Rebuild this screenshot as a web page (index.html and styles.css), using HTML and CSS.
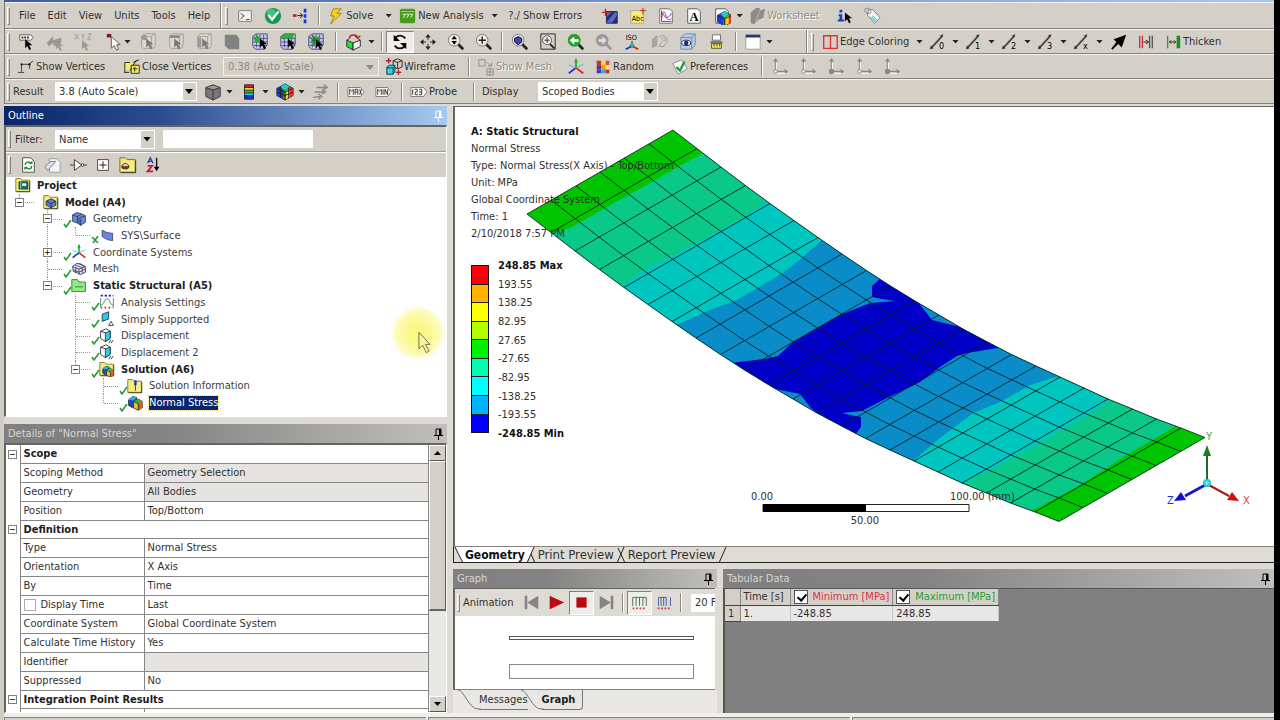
FILE: index.html
```html
<!DOCTYPE html>
<html lang="en">
<head>
<meta charset="utf-8">
<title>A: Static Structural - Mechanical</title>
<link rel="stylesheet" href="styles.css">
</head>
<body>
<svg class="defs" aria-hidden="true">
  <defs>
    <g id="ptr"><path d="M0 0v10l2.500-2.500 2 4.500 2-1-2-4.500h3.500z"/></g>
    <g id="gridcube">
      <path d="M2 4l4-3h12v12l-3 5H5l-3-3z" fill="#c8c8f4" stroke="#445" stroke-width="1"/>
      <path d="M6 2v14M10 2v15M14 2v15M18 6H3M18 10H3M17 14H3M2 4l4 3M5 1l3 4" stroke="#4a4a8a" stroke-width="1" fill="none"/>
    </g>
    <g id="graycube"><path d="M3 4l3-3h12v12l-2 4H5l-2-2z" fill="#dcd9d2" stroke="#9a9890"/><path d="M3 4h11l3-3M14 4v13" fill="none" stroke="#9a9890"/></g>
    <g id="folder"><path d="M1 4V2h6l2 2h9v14H1z" fill="#f6ee7c" stroke="#6b6420"/><path d="M18.500 5v13.500H2" fill="none" stroke="#333"/></g>
    <g id="lens"><path d="M12 12l6 6" stroke="#222" stroke-width="3"/><circle cx="8" cy="8" r="6.500" fill="#eceae4" stroke="#777"/></g>
    <g id="dispcube"><path d="M2 4l7-3 5 3v9l-6 4-6-4z" fill="#fff" stroke="#223"/><path d="M8 6l6-2v9l-6 4z" fill="#30d0e8" stroke="#223"/><path d="M2 4l6 2M12 19l3-4M15 19l3-4" stroke="#111" fill="none"/></g>
    <g id="rainbow"><path d="M1 6l9-5 9 5v8l-9 5-9-5z" fill="#28b428" stroke="#222"/><path d="M1 6l4-2 4 5-1 9-7-4z" fill="#2038d8"/><path d="M5 4l5-3 5 3-5 4z" fill="#20c8e0"/><path d="M14 5l5 1v8l-5 3z" fill="#e83020"/><path d="M11 9l4-3v10l-4 2z" fill="#f0d020"/><path d="M1 6l9 4 9-4M10 10v9" stroke="#222" fill="none"/></g>
    <g id="parts"><path d="M2 6l5-4 5 1v11l-5 2-5-3z" fill="#2048d8" stroke="#222"/><path d="M2 6l5-4 5 1-4 4z" fill="#20b8d8"/><path d="M8 8l6-3 5 3v8l-5 3-6-3z" fill="#e8c828" stroke="#222"/><path d="M8 8l6-3 5 3-5 3z" fill="#30b838"/><path d="M14 11l5-3v8l-5 3z" fill="#e85020"/><path d="M8 8l6 3v8" fill="none" stroke="#222"/></g>
    <g id="csys" fill="none"><path d="M5 15V3M5 15h11" stroke="#8a8882" stroke-width="1.500"/><path d="M5 0l-3 4h6zM19 15l-4-3v6z" fill="#8a8882"/><path d="M7 17h9M6 13V5" stroke="#fff"/></g>
    <g id="edge"><path d="M1 17L14 3" stroke="#444" stroke-width="2"/><path d="M0 18l4-1-3-3zM15 1l-4 2 2 2z" fill="#333"/></g>
    <g id="triad"><path d="M10 11V1" stroke="#20b020" stroke-width="2"/><path d="M10 0l-2 5h4z" fill="#20b020"/><path d="M10 11L2 17" stroke="#2030d0" stroke-width="2"/><path d="M10 11l8 6" stroke="#e02020" stroke-width="2"/><path d="M10 11l-8-3M10 11l8-4" stroke="#30c0c8"/></g>
    <g id="pin"><path d="M4 2h5v6M4 2v6M2 8.500h9M6.500 9v4" stroke="currentColor" fill="none"/><path d="M8 2v6" stroke="currentColor" stroke-width="2"/></g>
    <g id="tick"><path d="M2 6l2 3 5-7" fill="none" stroke="#1e9a2e" stroke-width="1.500"/></g>
  </defs>
</svg>

<div class="app">
<div class="titleline"></div>
<header class="bars">
  <div class="bar">
    <i class="grip"></i>
    <nav class="menu"><button>File</button><button>Edit</button><button>View</button><button>Units</button><button>Tools</button><button>Help</button></nav>
    <i class="edgeline"></i><i class="grip"></i>
    <button class="tool" aria-label="Command"><svg viewBox="0 0 20 20"><path d="M3 4h14v12H3z" fill="#f4f4f0" stroke="#777"/><path d="M5 7l4 3-4 3M11 14h4" fill="none" stroke="#333"/></svg></button>
    <button class="tool" aria-label="Solve status"><svg viewBox="0 0 20 20"><circle cx="10" cy="10" r="9" fill="#159a50"/><circle cx="8" cy="7" r="5" fill="#48c07c"/><path d="M5 9l4 5 7-9" fill="none" stroke="#fff" stroke-width="2.500"/></svg></button>
    <button class="tool" aria-label="Connections"><svg viewBox="0 0 20 20"><path d="M1 8h4v3H1z" fill="#c02030"/><path d="M6 9.500h5M9 7l3 2.500L9 12" stroke="#111" fill="none"/><path d="M13 2h3v4h-3zM13 8h3v4h-3zM13 14h3v4h-3z" fill="#2030d8"/></svg></button>
    <i class="sep"></i>
    <button class="text-tool wide-solve"><svg viewBox="0 0 20 20"><path d="M7 2h9l-5 5h5L4 19l4-9H4z" fill="#f8d020" stroke="#a08010"/></svg>Solve</button><i class="caret"></i>
    <button class="text-tool wide-new"><svg viewBox="0 0 20 20"><rect x="1" y="2" width="17" height="16" rx="2" fill="#4a9a20"/><path d="M2 5h15" stroke="#9cd070"/><path d="M4 8h3l-2 4M8 8h3l-2 4M12 8h3l-2 4" stroke="#fff" fill="none"/></svg>New Analysis</button><i class="caret"></i>
    <button class="text-tool wide-errors">?./ Show Errors</button>
    <button class="tool" aria-label="Section plane"><svg viewBox="0 0 20 20"><path d="M6 5h12v13H6z" fill="#5468c8" stroke="#223"/><path d="M12 18l6-9v9zM6 12l6-7h4L6 17z" fill="#20306a"/><path d="M1 6h8M5 2v8" stroke="#c02020" stroke-width="1.500"/></svg></button>
    <button class="tool" aria-label="Annotation"><svg viewBox="0 0 20 20"><path d="M2 4h14v14H2z" fill="#f8f070" stroke="#aa9"/><text x="3" y="15" class="ic">Abc</text><path d="M12 4h7M15.500 1v7" stroke="#c02020"/></svg></button>
    <button class="tool" aria-label="Chart"><svg viewBox="0 0 20 20"><path d="M3 2h11l3 3v13H3z" fill="#fafaff" stroke="#667"/><path d="M5 4v12h11" fill="none" stroke="#447"/><path d="M5 14c2-14 4-8 5-4s3 5 6 3" stroke="#d03030" fill="none"/><path d="M5 5c4 8 7 9 11 2" stroke="#3048d0" fill="none"/></svg></button>
    <button class="tool" aria-label="Comment"><svg viewBox="0 0 20 20"><path d="M3 2h11l3 3v13H3z" fill="#fafafa" stroke="#555"/><text x="5" y="15" class="ic-a">A</text></svg></button>
    <button class="tool" aria-label="Figure"><svg viewBox="0 0 20 20"><path d="M3 2h11l3 3v13H3z" fill="#fafafa" stroke="#555"/><svg x="4" y="4" width="12" height="12" viewBox="0 0 20 20"><use href="#rainbow"/></svg></svg></button><i class="caret"></i>
    <button class="text-tool off wide-sheet" disabled><svg viewBox="0 0 20 20"><path d="M3 6l6-5h4v3l6-2-2 10-5 2-5 5-4-1z" fill="#8d8b86"/><path d="M13 4l-5 14" stroke="#bbb"/></svg>Worksheet</button>
    <button class="tool" aria-label="Selection information"><svg viewBox="0 0 20 20"><path d="M5 3h3v3H5zM4 8h4v6h2v2H3v-2h2v-4H4z" fill="#2038c0"/><use href="#ptr" x="11" y="6"/></svg></button>
    <button class="tool" aria-label="Tag"><svg viewBox="0 0 20 20"><path d="M6 3h5l8 9-6 6-8-9z" fill="#f8f8f8" stroke="#777"/><path d="M11 9l5 5-3 3-5-5z" fill="#90d4e0"/><path d="M9 6C8 1 3 0 2 3s4 6 7 3" fill="none" stroke="#777"/></svg></button>
  </div>

  <div class="bar">
    <i class="grip"></i>
    <button class="tool" aria-label="Label"><svg viewBox="0 0 20 20"><path d="M2 2h12l3 3-3 3H2z" fill="#f8f8f4" stroke="#555"/><path d="M4 5h9" stroke="#333" stroke-width="2" stroke-dasharray="2 1"/><use href="#ptr" x="8" y="7"/></svg></button>
    <button class="tool" aria-label="Direction"><svg viewBox="0 0 20 20" fill="#9a9890"><path d="M1 11l7-8v5l9-3v6l-8 4-1-4-5 4z"/><use href="#ptr" x="11" y="8"/></svg></button>
    <button class="tool gap" aria-label="Coordinates"><svg viewBox="0 0 20 20" fill="#9a9890"><path d="M1 1l4 6M5 1L1 7M8 1l2 3 2-3M10 4v3M15 1h4l-4 6h4" stroke="#9a9890" fill="none"/><use href="#ptr" x="9" y="8"/></svg></button>
    <button class="tool tool-thin" aria-label="Select"><svg viewBox="0 0 20 20"><path d="M2 1h5v4H2z" fill="#7c1830"/><path d="M7 4v13l3-3 3 5 2-1-2-5h4z" fill="#fff" stroke="#555"/></svg></button><i class="caret"></i>
    <button class="tool" aria-label="Vertex"><svg viewBox="0 0 20 20"><use href="#graycube"/><circle cx="6" cy="5" r="3" fill="#999"/><use href="#ptr" x="8" y="6" fill="#777"/></svg></button>
    <button class="tool" aria-label="Edge"><svg viewBox="0 0 20 20"><use href="#graycube"/><path d="M3 4h11" stroke="#888" stroke-width="3"/><use href="#ptr" x="8" y="6" fill="#777"/></svg></button>
    <button class="tool" aria-label="Face"><svg viewBox="0 0 20 20"><use href="#graycube"/><path d="M3 5v11h4V5z" fill="#999"/><use href="#ptr" x="8" y="6" fill="#777"/></svg></button>
    <button class="tool" aria-label="Body"><svg viewBox="0 0 20 20"><path d="M2 2h13l3 4v12H6l-4-4z" fill="#828282"/></svg></button>
    <button class="tool" aria-label="Node"><svg viewBox="0 0 20 20"><use href="#gridcube"/><circle cx="7" cy="7" r="3.500" fill="#28b030"/><use href="#ptr" x="10" y="6"/></svg></button>
    <button class="tool" aria-label="Element face"><svg viewBox="0 0 20 20"><use href="#gridcube"/><path d="M3 4l3-3h11l-2 5H4z" fill="#28b030"/><use href="#ptr" x="10" y="6"/></svg></button>
    <button class="tool" aria-label="Element"><svg viewBox="0 0 20 20"><use href="#gridcube"/><path d="M5 4h9v9H5z" fill="#28b030"/><path d="M8 4v9M5 8h9" stroke="#154"/><use href="#ptr" x="10" y="7"/></svg></button>
    <i class="sep sep-wide"></i>
    <button class="tool" aria-label="Extend"><svg viewBox="0 0 20 20"><path d="M2 8l7 3v8l-7-4z" fill="#28e038" stroke="#222"/><path d="M9 11l8-3v7l-8 4z" fill="#f4f4f4" stroke="#222"/><path d="M2 8l3-2M17 8l-3-2" stroke="#222"/><path d="M5 6c0-5 9-5 9 0M11 3l3 3 3-3" stroke="#c02020" fill="none" stroke-width="1.500"/></svg></button><i class="caret"></i>
    <i class="sep"></i>
    <button class="tool pressed" aria-label="Rotate"><svg viewBox="0 0 20 20"><path d="M5 5c3-3 8-3 11 1M15 15c-3 3-8 3-11-1" fill="none" stroke="#111" stroke-width="2"/><path d="M3 2v7h7zM17 18v-7h-7z"/></svg></button>
    <button class="tool" aria-label="Pan"><svg viewBox="0 0 20 20"><path d="M10 3v14M3 10h14" stroke="#222" stroke-dasharray="5 4"/><path d="M10 1L7 5h6zM10 19l-3-4h6zM1 10l4-3v6zM19 10l-4-3v6z" fill="#222"/></svg></button>
    <button class="tool" aria-label="Zoom"><svg viewBox="0 0 20 20"><use href="#lens"/><path d="M8 3L5 7h6zM8 13L5 9h6z"/></svg></button>
    <button class="tool" aria-label="Box zoom"><svg viewBox="0 0 20 20"><use href="#lens"/><path d="M8 4v8M4 8h8" stroke="#222" stroke-width="1.500"/></svg></button>
    <i class="sep"></i>
    <button class="tool" aria-label="Fit"><svg viewBox="0 0 20 20"><use href="#lens"/><path d="M4 6l4-2 4 2v4l-4 3-4-3z" fill="#3848b8" stroke="#112"/></svg></button>
    <button class="tool" aria-label="Magnifier"><svg viewBox="0 0 20 20"><path d="M2 1h16v17H2z" fill="none" stroke="#222"/><path d="M12 12l5 5" stroke="#222" stroke-width="2"/><circle cx="9" cy="8" r="5" fill="#eee" stroke="#555"/><path d="M9 5v6M6 8h6" stroke="#222"/></svg></button>
    <button class="tool" aria-label="Previous view"><svg viewBox="0 0 20 20"><use href="#lens"/><circle cx="8" cy="8" r="7" fill="#28a030"/><path d="M3 8l5-4v3h5v3H8v3z" fill="#fff"/></svg></button>
    <button class="tool" aria-label="Next view"><svg viewBox="0 0 20 20"><path d="M12 12l6 6" stroke="#999" stroke-width="3"/><circle cx="8" cy="8" r="7" fill="#999"/><path d="M13 8L8 4v3H4v3h4v3z" fill="#ddd"/></svg></button>
    <button class="tool" aria-label="Isometric view"><svg viewBox="0 0 20 20"><text x="3" y="8" class="ic-iso">ISO</text><path d="M10 14V9" stroke="#20a080" stroke-width="2"/><circle cx="10" cy="14" r="2.500" fill="#20b8a0"/><path d="M9 15l-6 3" stroke="#2030d0" stroke-width="2"/><path d="M11 15l6 3" stroke="#d02020" stroke-width="2"/></svg></button>
    <button class="tool" aria-label="Look at"><svg viewBox="0 0 20 20"><path d="M1 7l6-5v12l-6 3z" fill="#a8a69f"/><path d="M9 5c3-4 9-2 9 3 0 4-4 3-4 7H9l3-5" fill="#d8d5ce" stroke="#999"/><circle cx="14" cy="7" r="2" fill="none" stroke="#999"/></svg></button>
    <button class="tool" aria-label="View manager"><svg viewBox="0 0 20 20"><path d="M2 5l5-4h11v12l-4 5H2z" fill="#b8cce8" stroke="#68a"/><path d="M2 5h12v13M14 5l4-4" stroke="#68a" fill="none"/><ellipse cx="8" cy="11" rx="5" ry="3" fill="#fff" stroke="#222"/><circle cx="8" cy="11" r="2.500" fill="#1c2c60"/></svg></button>
    <button class="tool" aria-label="Ruler"><svg viewBox="0 0 20 20"><path d="M6 2h9v6H6z" fill="#fff" stroke="#666"/><path d="M4 9h13v3H4z" fill="#777"/><path d="M5 12h11v5H5z" fill="#f0e848" stroke="#553"/><path d="M8 12v3M11 12v3M14 12v3" stroke="#553"/></svg></button>
    <i class="sep sep-wide"></i>
    <button class="tool tool-mid" aria-label="Window layout"><svg viewBox="0 0 20 20"><path d="M2 2h16v16H2z" fill="#fff" stroke="#999"/><path d="M2 2h16v3H2z" fill="#1c3880"/></svg></button><i class="caret"></i>
    <i class="edgeline far"></i><i class="grip"></i>
    <button class="text-tool wide-edge"><svg viewBox="0 0 20 20"><path d="M3 3h15v14H3zM10.500 3v14" fill="none" stroke="#e03030" stroke-width="1.500"/></svg>Edge Coloring</button><i class="caret"></i>
    <button class="tool tool-mid" aria-label="Edges 0"><svg viewBox="0 0 20 20"><use href="#edge"/><text x="10" y="18" class="ic-n">0</text></svg></button><i class="caret"></i>
    <button class="tool tool-mid" aria-label="Edges 1"><svg viewBox="0 0 20 20"><use href="#edge"/><text x="10" y="18" class="ic-n">1</text></svg></button><i class="caret"></i>
    <button class="tool tool-mid" aria-label="Edges 2"><svg viewBox="0 0 20 20"><use href="#edge"/><text x="10" y="18" class="ic-n">2</text></svg></button><i class="caret"></i>
    <button class="tool tool-mid" aria-label="Edges 3"><svg viewBox="0 0 20 20"><use href="#edge"/><text x="10" y="18" class="ic-n">3</text></svg></button><i class="caret"></i>
    <button class="tool tool-mid" aria-label="Edges X"><svg viewBox="0 0 20 20"><use href="#edge"/><text x="10" y="18" class="ic-n">x</text></svg></button><i class="caret"></i>
    <button class="tool tool-mid" aria-label="Edge direction"><svg viewBox="0 0 20 20"><path d="M18 2L4 7l3 3-5 7 7-5 4 4z"/><path d="M2 18l9-9" stroke="#000" stroke-width="2"/></svg></button>
    <button class="tool" aria-label="Mesh connection"><svg viewBox="0 0 20 20"><path d="M3 3v14M6 3v14" stroke="#c83040" stroke-width="1.500"/><path d="M14 3v14M17 3v14" stroke="#555" stroke-width="1.500"/><path d="M7 10h5M10 8l3 2-3 2" stroke="#222" fill="none"/></svg></button>
    <button class="text-tool"><svg viewBox="0 0 20 20"><path d="M4 3v14" stroke="#20a040" stroke-width="1.500"/><path d="M14 3h4v14h-4z" fill="#189020"/><path d="M6 10h7M8 8l-2 2 2 2M11 8l2 2-2 2" stroke="#222" fill="none"/></svg>Thicken</button>
  </div>

  <div class="bar">
    <i class="grip"></i>
    <button class="text-tool wide-show"><svg viewBox="0 0 20 20"><path d="M5 7h9M5 7v8M14 7v5M1 16h7M12 8l6-5" fill="none" stroke="#333"/><path d="M4 6h2v2H4zM13 6h2v2h-2z"/></svg>Show Vertices</button>
    <button class="text-tool wide-close"><svg viewBox="0 0 20 20"><path d="M2 4h9v9H2z" fill="#f4ee70"/><path d="M2 16V5h6M1 16h6M9 8h9v9H9zM8 14l7-12M11 5l7-3" fill="none" stroke="#222"/><path d="M10 9h7v7h-7z" fill="#f4ee30"/><path d="M13 10v5M11 12h5" stroke="#222"/></svg>Close Vertices</button>
    <span class="combo combo-off"><select disabled aria-label="Vertex scale"><option>0.38 (Auto Scale)</option></select><b></b></span>
    <button class="text-tool wide-wire"><svg viewBox="0 0 20 20"><path d="M9 3l5-2 5 2v7l-5 2-5-2zM9 3l5 2 5-2M14 5v7" fill="none" stroke="#222"/><path d="M2 10l3-2h6v7l-2 3H2z" fill="#30d8e0" stroke="#133"/><path d="M2 11h7l2-2M9 11v7" stroke="#133" fill="none"/><path d="M1 3h6M4 0v6M12 16h6M15 13v6" stroke="#b01838" stroke-width="1.500"/></svg>Wireframe</button>
    <i class="sep"></i>
    <button class="text-tool off wide-mesh" disabled><svg viewBox="0 0 20 20" fill="none" stroke="#8d8b86"><path d="M2 2h7v7H2zM11 12h7v7h-7zM14.500 12v7M11 15.500h7M11 5l5 4M16 5v4h-4"/></svg>Show Mesh</button>
    <button class="tool" aria-label="Triad"><svg viewBox="0 0 20 20"><use href="#triad"/></svg></button>
    <button class="text-tool wide-random"><svg viewBox="0 0 20 20"><path d="M3 3h5v5H3z" fill="#c03828"/><path d="M8 3h5v5H8z" fill="#f8d838"/><path d="M13 3h4v5h-4z" fill="#d04878"/><path d="M3 8h5v5H3z" fill="#702890"/><path d="M8 8h5v5H8z" fill="#f09028"/><path d="M13 8h4v5h-4z" fill="#f8e850"/><path d="M3 13h5v4H3z" fill="#2848b8"/><path d="M8 13h5v4H8z" fill="#38a8d8"/><path d="M13 13h4v4h-4z" fill="#c02838"/></svg>Random</button>
    <button class="text-tool wide-pref"><svg viewBox="0 0 20 20"><path d="M2 6l10-4 6 10-10 6z" fill="#f4fafa" stroke="#889"/><path d="M6 10l4 4 5-10" fill="none" stroke="#20a030" stroke-width="2.500"/></svg>Preferences</button>
    <i class="sep"></i>
    <button class="tool" aria-label="Remote point 1"><svg viewBox="0 0 20 20"><use href="#csys"/><circle cx="5" cy="15" r="2" fill="#eee" stroke="#888"/></svg></button>
    <button class="tool" aria-label="Remote point 2"><svg viewBox="0 0 20 20"><use href="#csys"/><circle cx="5" cy="15" r="2" fill="#eee" stroke="#888"/></svg></button>
    <button class="tool" aria-label="Remote point 3"><svg viewBox="0 0 20 20"><use href="#csys"/><circle cx="5" cy="15" r="3" fill="#888"/></svg></button>
    <button class="tool" aria-label="Remote point 4"><svg viewBox="0 0 20 20"><use href="#csys"/><circle cx="5" cy="15" r="2" fill="#eee" stroke="#888"/></svg></button>
    <button class="tool" aria-label="Remote point 5"><svg viewBox="0 0 20 20"><use href="#csys"/><circle cx="5" cy="15" r="3" fill="#888"/></svg></button>
  </div>

  <div class="bar">
    <i class="grip"></i>
    <label class="barlabel" for="result">Result</label>
    <span class="combo combo-result"><select id="result"><option>3.8 (Auto Scale)</option></select><b></b></span>
    <button class="tool tool-mid" aria-label="Geometry display"><svg viewBox="0 0 20 20"><path d="M2 5l8-3 8 3v10l-8 4-8-4z" fill="#777" stroke="#333"/><path d="M3 5l7-2 7 2-7 2z" fill="#999"/><path d="M2 5l8 3 8-3M10 8v11" stroke="#333" fill="none"/></svg></button><i class="caret"></i>
    <button class="tool tool-mid" aria-label="Contours"><svg viewBox="0 0 20 20"><path d="M5 2h10v3H5z" fill="#e02020"/><path d="M5 5h10v3H5z" fill="#f8e020"/><path d="M5 8h10v3H5z" fill="#30c030"/><path d="M5 11h10v3H5z" fill="#20c8e8"/><path d="M5 14h10v4H5z" fill="#2030c8"/><path d="M5 2h10v16H5zM5 5h10M5 8h10M5 11h10M5 14h10" fill="none" stroke="#222"/></svg></button><i class="caret"></i>
    <button class="tool tool-mid" aria-label="Edges"><svg viewBox="0 0 20 20"><use href="#rainbow"/><path d="M5 4v12M14 5v12M1 10l9 4 9-4" stroke="#222" fill="none"/></svg></button><i class="caret"></i>
    <button class="tool tool-mid" aria-label="Vectors"><svg viewBox="0 0 20 20"><path d="M5 5h11M13 2l4 3-4 2M3 10h11M11 7l4 3-4 2M1 16l8-1M7 12l4 3-4 3" stroke="#8a8882" stroke-width="1.500" fill="none"/></svg></button>
    <i class="sep"></i>
    <button class="tool" aria-label="Maximum"><svg viewBox="0 0 20 20"><path d="M1 5h14l4 5-4 5H1z" fill="#f6f6f2" stroke="#777"/><path d="M3 13V7l2 2 2-2v6M9 13V7h3v6M9 10h3M14 7l2 6M16 7l-2 6" stroke="#333" fill="none"/></svg></button>
    <button class="tool" aria-label="Minimum"><svg viewBox="0 0 20 20"><path d="M1 5h13l4 5-4 5H1z" fill="#f6f6f2" stroke="#777"/><path d="M3 13V7l2 2 2-2v6M9 7v6M11 13V7l3 6V7" stroke="#333" fill="none"/></svg></button>
    <i class="sep"></i>
    <button class="text-tool wide-probe"><svg viewBox="0 0 20 20"><path d="M1 5h14l4 5-4 5H1z" fill="#f6f6f2" stroke="#777"/><path d="M3 7v6M5 7h3v3H6v3h3M10 7h3v6h-3M10 10h3" stroke="#333" fill="none"/></svg>Probe</button>
    <i class="sep"></i>
    <label class="barlabel display-label" for="display">Display</label>
    <span class="combo combo-display"><select id="display"><option>Scoped Bodies</option></select><b></b></span>
  </div>
</header>

<main class="work">
  <div class="left">
    <section class="outline panel">
      <h2 class="caption active">Outline<svg class="pin" viewBox="0 0 13 14"><use href="#pin"/></svg></h2>
      <div class="frame">
        <div class="minibar">
          <i class="grip"></i><label for="filter">Filter:</label>
          <span class="combo combo-filter"><select id="filter"><option>Name</option></select><b></b></span>
          <input class="filtertext" type="text" aria-label="Filter text">
        </div>
        <div class="minibar">
          <i class="grip"></i>
          <button class="mini" aria-label="Refresh"><svg viewBox="0 0 20 20"><path d="M4 2h9l4 4v12H4z" fill="#fff" stroke="#444"/><path d="M7 10c0-4 4-4 6-2M14 11c0 4-4 4-6 2" stroke="#189030" stroke-width="1.500" fill="none"/><path d="M11 9h4V5zM10 12H6v4z" fill="#189030"/></svg></button>
          <button class="mini" aria-label="Clear"><svg viewBox="0 0 20 20"><path d="M6 3h8l4 4v11H6z" fill="#f4f4f8" stroke="#999"/><path d="M1 12l6-6h6l-6 7-3 3z" fill="#dcdaf0" stroke="#778"/></svg></button>
          <button class="mini" aria-label="Gate"><svg viewBox="0 0 20 20"><path d="M6 4l8 6-8 6zM1 10h5M16 10h4" fill="#fff" stroke="#333"/><circle cx="15" cy="10" r="1.500" fill="#fff" stroke="#333"/></svg></button>
          <button class="mini" aria-label="Expand all"><svg viewBox="0 0 20 20"><path d="M4 4h12v12H4z" fill="#fff" stroke="#444"/><path d="M10 6v8M6 10h8" stroke="#111"/></svg></button>
          <button class="mini" aria-label="Folders"><svg viewBox="0 0 20 20"><use href="#folder"/><ellipse cx="7" cy="12" rx="4" ry="2.500" fill="#b02020" stroke="#333"/><path d="M3 12c1-5 7-5 8 0z" fill="#f8c8a0" stroke="#333"/></svg></button>
          <button class="mini" aria-label="Sort"><svg viewBox="0 0 20 20"><path d="M4 8l3-6 3 6M5 6h4" stroke="#2040b0" stroke-width="1.500" fill="none"/><path d="M4 11h5l-5 6h6" stroke="#c02030" stroke-width="2" fill="none"/><path d="M14 2v13" stroke="#111" stroke-width="1.500"/><path d="M11 12h6l-3 5z"/></svg></button>
        </div>
        <ul class="tree">
          <li><span class="ti"><svg viewBox="0 0 20 20"><use href="#folder"/><path d="M5 6h11v9H5z" fill="#187868" stroke="#122"/><path d="M9 8h5v3H9z" fill="#fff"/><path d="M7 6v9" stroke="#9dd"/></svg></span><strong>Project</strong></li>
          <li><i class="e"><b>−</b></i><span class="ti"><svg viewBox="0 0 20 20"><use href="#folder"/><path d="M4 9l6-3 6 3v5l-6 3-6-3z" fill="#6080d8" stroke="#123"/><path d="M4 9l6 3 6-3M10 12v5" stroke="#123" fill="none"/></svg></span><strong>Model (A4)</strong></li>
          <li><i></i><i class="t"><b>−</b></i><span class="ti"><svg viewBox="0 0 20 20"><path d="M2 5l5-3 5 1 6 3v8l-6 4-4-3-6-2z" fill="#6c88e0" stroke="#234"/><path d="M2 5l6 2v8M8 7l5-3M10 9l8-3M10 9v7M12 10v8" stroke="#234" fill="none"/></svg><svg class="ck" viewBox="0 0 10 10"><use href="#tick"/></svg></span>Geometry</li>
          <li><i></i><i class="v"></i><i class="e"></i><span class="ti"><svg viewBox="0 0 20 20"><path d="M4 4l6 3 7 1v9l-6-1-7-4z" fill="#6888e8" stroke="#335"/></svg><svg class="ck" viewBox="0 0 10 10"><path d="M2 3l6 6M8 2L3 9" stroke="#1e9a2e" stroke-width="1.500"/></svg></span>SYS\Surface</li>
          <li><i></i><i class="t"><b>+</b></i><span class="ti"><svg viewBox="0 0 20 20"><use href="#triad"/></svg><svg class="ck" viewBox="0 0 10 10"><use href="#tick"/></svg></span>Coordinate Systems</li>
          <li><i></i><i class="t"></i><span class="ti"><svg viewBox="0 0 20 20"><path d="M2 7l5-4 6 1 5 3v7l-6 3-4-2-5-2z" fill="#e8e0f0" stroke="#223"/><path d="M2 7l8 3 8-3M10 10v7M5 5l8 3M10 3l6 4M6 8v7M14 8v7M3 11l7 3 8-4" stroke="#335" fill="none"/></svg><svg class="ck" viewBox="0 0 10 10"><use href="#tick"/></svg></span>Mesh</li>
          <li><i></i><i class="e"><b>−</b></i><span class="ti"><svg viewBox="0 0 20 20"><path d="M1 5V2h7l2 3h8v12H1z" fill="#90ee80" stroke="#346034"/><path d="M5 11h10" stroke="#346034"/></svg><svg class="ck" viewBox="0 0 10 10"><use href="#tick"/></svg></span><strong>Static Structural (A5)</strong></li>
          <li><i></i><i></i><i class="t"></i><span class="ti"><svg viewBox="0 0 20 20"><path d="M2 16V5M18 16V5M2 14c5 0 4-8 8-8s3 8 8 8" stroke="#2a7858" fill="none"/><path d="M2 2h16" stroke="#2030c0" stroke-width="2" stroke-dasharray="3 2"/><path d="M2 17h16" stroke="#c02030" stroke-width="2" stroke-dasharray="2 3"/></svg><svg class="ck" viewBox="0 0 10 10"><use href="#tick"/></svg></span>Analysis Settings</li>
          <li><i></i><i></i><i class="t"></i><span class="ti"><svg viewBox="0 0 20 20"><path d="M4 4l8-3v9l-8 3z" fill="#30c8e8" stroke="#123"/><path d="M12 18l3-5 3 5z" fill="#fff" stroke="#222"/></svg><svg class="ck" viewBox="0 0 10 10"><use href="#tick"/></svg></span>Simply Supported</li>
          <li><i></i><i></i><i class="t"></i><span class="ti"><svg viewBox="0 0 20 20"><use href="#dispcube"/></svg><svg class="ck" viewBox="0 0 10 10"><use href="#tick"/></svg></span>Displacement</li>
          <li><i></i><i></i><i class="t"></i><span class="ti"><svg viewBox="0 0 20 20"><use href="#dispcube"/></svg><svg class="ck" viewBox="0 0 10 10"><use href="#tick"/></svg></span>Displacement 2</li>
          <li><i></i><i></i><i class="e"><b>−</b></i><span class="ti"><svg viewBox="0 0 20 20"><use href="#folder"/><svg x="3" y="5" width="13" height="12" viewBox="0 0 20 20"><use href="#parts"/></svg></svg><svg class="ck" viewBox="0 0 10 10"><use href="#tick"/></svg></span><strong>Solution (A6)</strong></li>
          <li><i></i><i></i><i></i><i class="t"></i><span class="ti"><svg viewBox="0 0 20 20"><use href="#folder"/><path d="M9 3h3v6H9z" fill="#2030c0"/><path d="M10.500 8v8" stroke="#222"/></svg><svg class="ck" viewBox="0 0 10 10"><use href="#tick"/></svg></span>Solution Information</li>
          <li><i></i><i></i><i></i><i class="e"></i><span class="ti"><svg viewBox="0 0 20 20"><use href="#parts"/></svg><svg class="ck" viewBox="0 0 10 10"><use href="#tick"/></svg></span><span class="selected">Normal Stress</span></li>
        </ul>
        <div class="pointer"><svg viewBox="0 0 14 24"><path d="M1 1v18l4-4 4 8 3-2-4-7h5z" fill="#f8f4a0" stroke="#6b6835"/></svg></div>
      </div>
    </section>

    <section class="details panel">
      <h2 class="caption">Details of "Normal Stress"<svg class="pin dark" viewBox="0 0 13 14"><use href="#pin"/></svg></h2>
      <div class="frame split">
        <div class="gridclip">
        <table class="props">
          <colgroup><col class="c0"><col class="c1"><col></colgroup>
          <tr class="group"><td><b>−</b></td><th colspan="2">Scope</th></tr>
          <tr><td></td><th>Scoping Method</th><td class="ro">Geometry Selection</td></tr>
          <tr><td></td><th>Geometry</th><td class="ro">All Bodies</td></tr>
          <tr><td></td><th>Position</th><td>Top/Bottom</td></tr>
          <tr class="group"><td><b>−</b></td><th colspan="2">Definition</th></tr>
          <tr><td></td><th>Type</th><td>Normal Stress</td></tr>
          <tr><td></td><th>Orientation</th><td>X Axis</td></tr>
          <tr><td></td><th>By</th><td>Time</td></tr>
          <tr><td></td><th><label class="cklabel"><input type="checkbox">Display Time</label></th><td>Last</td></tr>
          <tr><td></td><th>Coordinate System</th><td>Global Coordinate System</td></tr>
          <tr><td></td><th>Calculate Time History</th><td>Yes</td></tr>
          <tr><td></td><th>Identifier</th><td class="ro"></td></tr>
          <tr><td></td><th>Suppressed</th><td>No</td></tr>
          <tr class="group"><td><b>−</b></td><th colspan="2">Integration Point Results</th></tr>
          <tr><td></td><th></th><td></td></tr>
        </table>
        </div>
        <div class="scroll"><button aria-label="Scroll up"><i class="up"></i></button><div class="thumb"></div><div class="track"></div><button aria-label="Scroll down"><i class="down"></i></button></div>
      </div>
    </section>
  </div>

  <div class="right">
    <section class="viewport">
      <svg class="scene" viewBox="455 107 819 439" preserveAspectRatio="xMinYMin meet">
        <defs>
          <path id="rib" d="M673 130L697 148.500L721 167L745.500 185.500L770 203.500L794 220.500L818 237.500L842 254L866.500 270.500L890.500 286L915 301L939 315L963 329L987.500 342L1011.500 354.500L1036 366L1060 377L1084 388L1108 399L1132.500 409L1156.500 419L1181 428L1205 437.500"/>
          <clipPath id="plate"><path d="M673 130L697 148.500L721 167L745.500 185.500L770 203.500L794 220.500L818 237.500L842 254L866.500 270.500L890.500 286L915 301L939 315L963 329L987.500 342L1011.500 354.500L1036 366L1060 377L1084 388L1108 399L1132.500 409L1156.500 419L1181 428L1205 437.500L1059 521.500L1035 512L1010.500 503L986.500 493L962 483L938 472L914 461L890 450L865.500 438.500L841.500 426L817 413L793 399L769 385L744.500 370L720.500 354.500L696 338L672 321.500L648 304.500L624 287.500L599.500 269.500L575 251L551 232.500L527 214z"/></clipPath>
          <radialGradient id="ball"><stop offset="0" stop-color="#80f4f0"/><stop offset="1" stop-color="#18b8bc"/></radialGradient>
        </defs>
        <g clip-path="url(#plate)">
          <path d="M500 100h740v440H500z" fill="#00c400"/>
          <path d="M706 150L703 153L570 228L545 236L600 340L760 440L980 520L1028 512L1037 508L1080 485L1130 453L1178 425L900 250z" fill="#0ac888"/>
          <path d="M770 199L747 215L697 243L650 267L618 288L690 380L860 480L950 492L973 478L1000 465L1040 443L1097 410L1112 397L900 250z" fill="#00c6c0"/>
          <path d="M822 240L803 257L783 273L737 300L710 310L674 326L720 390L860 460L908 465L920 455L940 438L973 413L1000 402L1030 385L1062 375L900 250z" fill="#0a8cc8"/>
          <path d="M882 277L872 286V297L882 299L895 301L870 303L840 315L817 328L793 342L778 356L765 359L730 363L775 389L800 394L810 407L819 415L855 435L861 427V417L850 415L842 413L862 411L887 398L920 382L940 367L957 356L967 353L1004 347L960 327L932 320L918 302z" fill="#0000c8"/>
        </g>
        <g fill="none" stroke="#082020" stroke-width="1" stroke-opacity=".85">
          <use href="#rib"/><use href="#rib" x="-24" y="14"/><use href="#rib" x="-49" y="28"/><use href="#rib" x="-73" y="42"/><use href="#rib" x="-97" y="56"/><use href="#rib" x="-122" y="70"/><use href="#rib" x="-146" y="84"/>
          <path d="M673 130l-146 84M697 148.500l-146 84M721 167l-146 84M745.500 185.500l-146 84M770 203.500l-146 84M794 220.500l-146 84M818 237.500l-146 84M842 254l-146 84M866.500 270.500l-146 84M890.500 286l-146 84M915 301l-146 84M939 315l-146 84M963 329l-146 84M987.500 342l-146 84M1011.500 354.500l-146 84M1036 366l-146 84M1060 377l-146 84M1084 388l-146 84M1108 399l-146 84M1132.500 409l-146 84M1156.500 419l-146 84M1181 428l-146 84M1205 437.500l-146 84"/>
        </g>
        <g class="scale">
          <path d="M763 504.500h206v7h-206z" fill="#fff" stroke="#222"/><path d="M763 504h103v8h-103z"/>
          <text x="762" y="500" text-anchor="middle">0.00</text><text x="950" y="500">100.00 (mm)</text><text x="865" y="524" text-anchor="middle">50.00</text>
        </g>
        <g class="axes">
          <path d="M1207 484v-30" stroke="#206830" stroke-width="2"/><path d="M1207 445l4 11h-8z" fill="#188020"/>
          <path d="M1207 484l-22 12" stroke="#1818c8" stroke-width="3"/><path d="M1174 501l7-9 5 8z" fill="#1010d0"/>
          <path d="M1207 484l22 12" stroke="#b01818" stroke-width="2"/><path d="M1239 501l-7-9-5 8z" fill="#d01010"/>
          <circle cx="1207" cy="483" r="4" fill="url(#ball)"/>
          <text class="ay" x="1206" y="440">Y</text><text class="az" x="1167" y="504">Z</text><text class="ax" x="1243" y="504">X</text>
        </g>
      </svg>
      <div class="notes">
        <strong>A: Static Structural</strong>
        <span>Normal Stress</span>
        <span>Type: Normal Stress(X Axis) - Top/Bottom</span>
        <span>Unit: MPa</span>
        <span>Global Coordinate System</span>
        <span>Time: 1</span>
        <span>2/10/2018 7:57 PM</span>
        <div class="legend">
          <div class="swatches"><i class="s1"></i><i class="s2"></i><i class="s3"></i><i class="s4"></i><i class="s5"></i><i class="s6"></i><i class="s7"></i><i class="s8"></i><i class="s9"></i></div>
          <div class="values"><strong>248.85 Max</strong><span>193.55</span><span>138.25</span><span>82.95</span><span>27.65</span><span>-27.65</span><span>-82.95</span><span>-138.25</span><span>-193.55</span><strong>-248.85 Min</strong></div>
        </div>
      </div>
    </section>
    <nav class="viewtabs">
      <svg class="slope" viewBox="0 0 10 16"><path d="M1 0l8 16H10V0z" fill="#fff"/><path d="M1 0l8 16" stroke="#222"/></svg>
      <button class="current">Geometry</button>
      <svg class="slope" viewBox="0 0 10 16"><path d="M0 0h8L1 16H0z" fill="#fff"/><path d="M8 0L1 16M5 7l4 9" stroke="#222"/></svg>
      <button>Print Preview</button>
      <svg class="slope" viewBox="0 0 10 16"><path d="M8 0L1 16M2 1l7 15" stroke="#222"/></svg>
      <button>Report Preview</button>
      <svg class="slope" viewBox="0 0 10 16"><path d="M8 0L1 16" stroke="#222"/></svg>
    </nav>

    <div class="lower">
      <section class="graph panel">
        <h2 class="caption">Graph<svg class="pin dark" viewBox="0 0 13 14"><use href="#pin"/></svg></h2>
        <div class="anim">
          <i class="grip"></i><span class="animlabel">Animation</span>
          <button class="play" aria-label="First"><svg viewBox="0 0 20 20"><path d="M2 2h3v16H2zM18 2v16L5 10z" fill="#848484"/></svg></button>
          <button class="play" aria-label="Play"><svg viewBox="0 0 20 20"><path d="M2 2l17 8-17 8z" fill="#c00810"/></svg></button>
          <button class="play pressed" aria-label="Stop"><svg viewBox="0 0 20 20"><path d="M4 4h12v12H4z" fill="#b80810"/></svg></button>
          <button class="play" aria-label="Last"><svg viewBox="0 0 20 20"><path d="M15 2h3v16h-3zM2 2v16l13-8z" fill="#848484"/></svg></button>
          <i class="sep"></i>
          <button class="play pressed" aria-label="Distributed"><svg viewBox="0 0 20 20"><path d="M2 14V4h16v10M6 4v10M10 4v10M14 4v10" stroke="#386838" fill="none"/><path d="M2 17h16" stroke="#c04040" stroke-width="2" stroke-dasharray="2 2"/></svg></button>
          <button class="play" aria-label="Result sets"><svg viewBox="0 0 20 20"><path d="M3 14V4h9v10M6 4v10M9 4v10M17 4v10" stroke="#3848a0" fill="none"/><path d="M2 17h16" stroke="#c04040" stroke-width="2" stroke-dasharray="2 2"/></svg></button>
          <i class="sep"></i>
          <input class="frames" type="text" value="20 F" aria-label="Frames">
        </div>
        <div class="chart"><div class="timeline"></div><div class="slot"></div></div>
        <nav class="foottabs">
          <button><svg viewBox="0 0 24 20"><path d="M1 0c6 0 11 19 20 19h3" fill="none" stroke="#777"/></svg><span>Messages</span></button>
          <button class="current"><svg viewBox="0 0 24 20"><path d="M1 0c7 1 11 19 20 19h3" fill="none" stroke="#777"/></svg><span>Graph</span></button>
        </nav>
      </section>
      <section class="tabular panel">
        <h2 class="caption">Tabular Data<svg class="pin dark" viewBox="0 0 13 14"><use href="#pin"/></svg></h2>
        <div class="sheet">
          <table>
            <tr><th class="n"></th><th class="tm">Time [s]</th><th class="val"><label class="cklabel min"><input type="checkbox" checked>Minimum [MPa]</label></th><th class="val"><label class="cklabel max"><input type="checkbox" checked>Maximum [MPa]</label></th></tr>
            <tr><th class="n">1</th><td>1.</td><td>-248.85</td><td>248.85</td></tr>
          </table>
        </div>
      </section>
    </div>
  </div>
</main>
<footer class="status"><span></span><span></span><span></span></footer>
</div>
</body>
</html>
```

FILE: styles.css
```css
* { box-sizing: border-box; }
html, body { height: 100%; margin: 0; }
body {
  background: #000;
  color: #303030;
  font-family: "DejaVu Sans Condensed", "Noto Sans", "Liberation Sans", sans-serif;
  font-size: 11px;
  line-height: 15px;
  overflow: hidden;
}
button, input, select { font: inherit; color: inherit; padding: 0; border: 0; background: none; margin: 0; border-radius: 0; }
.defs { position: absolute; width: 0; height: 0; }
svg { display: block; flex: none; }
.app {
  height: 100%;
  margin-right: 6px;
  display: flex;
  flex-direction: column;
  background: #d4d0c8;
  border-left: 4px solid #d0cdc6;
}
.titleline { height: 2px; background: linear-gradient(90deg, #3c5ca4, #7c9cd8 60%, #a6caf0); }

/* toolbars */
.bars { border-left: 1px solid #77756f; }
.bar {
  display: flex;
  align-items: center;
  height: 25px;
  border-top: 1px solid #f4f2ee;
  border-bottom: 1px solid #85837d;
  white-space: nowrap;
  overflow: hidden;
}
.bar:first-child { height: 27px; }
.grip { flex: none; width: 3px; height: 18px; margin: 0 3px 0 2px; border: 1px solid #fff; border-right-color: #88867f; border-bottom-color: #88867f; }
.edgeline { flex: none; width: 2px; height: 25px; margin: 0 1px 0 4px; border-left: 1px solid #85837d; border-right: 1px solid #fff; }
.edgeline.far { margin-left: 30px; }
.sep { flex: none; width: 2px; height: 19px; margin: 0 3px; border-left: 1px solid #8c8a84; border-right: 1px solid #fff; }
.sep-wide { margin-left: 5px; }
.menu { display: flex; }
.menu button { padding: 0 6px; }
.tool { flex: none; display: flex; align-items: center; justify-content: center; width: 28px; height: 22px; }
.tool svg, .text-tool svg, .mini svg { width: 18px; height: 18px; }
.tool.gap { margin-right: 7px; }
.tool-thin { width: 20px; }
.tool-mid { width: 26px; }
.text-tool { flex: none; display: flex; align-items: center; gap: 1px; height: 22px; padding-left: 4px; text-align: left; }
.caret { flex: none; width: 7px; height: 4px; margin-right: 3px; background: #222; clip-path: polygon(0 0, 100% 0, 50% 100%); }
.pressed { background: #eeedea; border: 1px solid #85837d; border-right-color: #fff; border-bottom-color: #fff; }
.off { color: #8d8b86; text-shadow: 1px 1px #fff; }
.ic { font-size: 8px; }
.ic-a { font: bold 14px "Liberation Serif", serif; }
.ic-iso { font-size: 8px; }
.ic-n { font-size: 10px; }
.wide-solve { width: 62px; }
.wide-new { width: 96px; }
.wide-errors { width: 95px; padding-left: 7px; }
.wide-sheet { width: 84px; padding-left: 2px; }
.wide-edge { width: 99px; }
.wide-show { width: 106px; }
.wide-close { width: 104px; }
.wide-wire { width: 86px; padding-left: 6px; }
.wide-mesh { width: 89px; }
.wide-random { width: 79px; }
.wide-pref { width: 89px; padding-left: 2px; }
.wide-probe { width: 64px; }
.barlabel { flex: none; width: 42px; }
.display-label { width: 60px; padding-left: 4px; }

.combo { flex: none; position: relative; height: 19px; background: #fff; }
.combo select { appearance: none; width: 100%; height: 100%; padding-left: 4px; background: #fff; display: block; }
.combo b { position: absolute; right: 1px; top: 1px; bottom: 1px; width: 13px; background: #d4d0c8; pointer-events: none; }
.combo b::after { content: ""; position: absolute; left: 2px; top: 6px; width: 8px; height: 5px; background: #000; clip-path: polygon(0 0, 100% 0, 50% 100%); }
.combo-result { width: 142px; margin-right: 3px; }
.combo-display { width: 120px; }
.combo-filter { width: 100px; }
.combo-off { width: 156px; border: 1px solid #f2f0ec; }
.combo-off select { background: #d4d0c8; color: #8d8b86; opacity: 1; }
.combo-off b::after { background: #8d8b86; }

/* work area */
.work { flex: 1; min-height: 0; display: flex; gap: 6px; padding-top: 2px; background: #dedbd5; }
.left { flex: none; width: 443px; display: flex; flex-direction: column; gap: 7px; }
.panel { display: flex; flex-direction: column; min-width: 0; }
.caption {
  flex: none;
  display: flex;
  align-items: center;
  justify-content: space-between;
  height: 19px;
  margin: 0;
  padding: 0 2px 0 4px;
  font-size: 11px;
  font-weight: 400;
  color: #d8d6d0;
  background: linear-gradient(90deg, #808080, #828282 35%, #c0bfbd);
}
.caption.active { color: #fff; background: linear-gradient(90deg, #0a246a, #2c4c90 35%, #a6caf0); }
.pin { width: 13px; height: 14px; color: #fff; }
.pin.dark { color: #000; }
.outline { height: 311px; }
.details { flex: 1; min-height: 0; }
.frame { flex: 1; min-height: 0; position: relative; display: flex; flex-direction: column; background: #fff; border: 1px solid #fff; border-top: 2px solid #66645f; border-left: 2px solid #66645f; }
.minibar { flex: none; display: flex; align-items: center; height: 25px; background: #d4d0c8; border-bottom: 1px solid #a09e98; }
.minibar + .minibar { border-bottom: 0; border-top: 1px solid #fff; }
.minibar + .minibar .grip { margin-right: 4px; }
.minibar label { width: 41px; padding-left: 1px; }
.filtertext { width: 150px; height: 18px; margin-left: 8px; background: #fff; }
.mini { width: 25px; height: 22px; display: flex; align-items: center; justify-content: center; }

.tree { flex: 1; display: grid; grid-auto-rows: 1fr; margin: 0; padding: 0 0 5px; list-style: none; color: #404040; }
.tree li { display: flex; align-items: center; white-space: nowrap; }
.tree strong { color: #202020; }
.tree li > i { position: relative; flex: none; align-self: stretch; width: 28px; }
.tree li > i.v::before, .tree li > i.t::before, .tree li > i.e::before { content: ""; position: absolute; left: 13px; top: 0; height: 100%; border-left: 1px dotted #999; }
.tree li > i.e::before { height: 50%; }
.tree li > i.t::after, .tree li > i.e::after { content: ""; position: absolute; left: 14px; right: 0; top: 50%; border-top: 1px dotted #999; }
.tree li > i > b { position: absolute; z-index: 1; left: 9px; top: 4px; }
.tree li > i > b, .props td > b { width: 9px; height: 9px; border: 1px solid #808080; background: #fff; color: #000; font-size: 9px; font-weight: 400; line-height: 7px; text-align: center; }
.ti { position: relative; flex: none; width: 18px; margin: 0 4px 0 9px; }
.ti svg { width: 16px; height: 16px; }
.ti .ck { position: absolute; left: -9px; top: 7px; width: 10px; height: 10px; }
.selected { background: #0a246a; color: #fff; outline: 1px dotted #e0d080; line-height: 14px; }
.pointer { position: absolute; right: 0; top: 178px; width: 56px; height: 56px; background: radial-gradient(circle, #fbf88a 0 25%, rgba(251,248,138,.6) 55%, transparent 70%); border-radius: 50%; padding: 26px 0 0 28px; }
.pointer svg { width: 13px; height: 23px; }

.split { flex-direction: row; }
.gridclip { flex: 1; min-width: 0; overflow: hidden; }
.props { width: 100%; border-collapse: collapse; table-layout: fixed; }
.props .c0 { width: 14px; }
.props .c1 { width: 124px; }
.props td, .props th { height: 19px; padding: 0 3px; border: 1px solid #868686; border-top: 0; font-weight: 400; text-align: left; white-space: nowrap; line-height: 15px; }
.props td:first-child { border-bottom: 0; border-left: 0; padding: 0 0 0 2px; }
.props .group th, .props .group td { height: 18px; }
.props .group th { font-weight: 700; color: #202020; }
.props td > b { display: block; }
.props .ro { background: #e6e4e1; }
.cklabel { display: flex; align-items: center; gap: 5px; }
.cklabel input { appearance: none; width: 12px; height: 12px; border: 1px solid #b0aeaa; background: #fff; }
.scroll { flex: none; width: 17px; display: flex; flex-direction: column; background: #e9e7e3; }
.scroll button { height: 16px; display: flex; align-items: center; justify-content: center; background: #d4d0c8; border: 1px solid #fff; border-right-color: #555; border-bottom-color: #555; }
.up, .down { width: 7px; height: 4px; background: #000; clip-path: polygon(50% 0, 100% 100%, 0 100%); }
.down { clip-path: polygon(0 0, 100% 0, 50% 100%); }
.thumb { flex: 150; background: #d4d0c8; border: 1px solid #fff; border-right-color: #555; border-bottom: 2px solid #666; }
.track { flex: 86; }

/* viewport */
.right { flex: 1; min-width: 0; display: flex; flex-direction: column; }
.viewport { flex: 1; min-height: 0; position: relative; overflow: hidden; background: #fff; border-left: 2px solid #66645f; border-top: 1px solid #66645f; }
.scene { position: absolute; left: 0; top: 0; width: 100%; height: 100%; }
.scene text { font-size: 11px; fill: #303030; }
.scene .ay { fill: #40a840; }
.scene .az { fill: #3030c8; }
.scene .ax { fill: #e04040; }
.notes { position: relative; display: flex; flex-direction: column; align-items: flex-start; padding: 16px; line-height: 17px; white-space: nowrap; }
.notes strong { color: #111; }
.legend { display: flex; gap: 9px; margin-top: 15px; }
.swatches { width: 18px; margin: 8px 0 9px; border: 1px solid #111; display: flex; flex-direction: column; }
.swatches i { flex: 1; }
.swatches i + i { border-top: 1px solid #222; }
.s1 { background: #f00; } .s2 { background: #ffb200; } .s3 { background: #ff0; } .s4 { background: #b2ff00; } .s5 { background: #00f000; }
.s6 { background: #00ffb2; } .s7 { background: #0ff; } .s8 { background: #00b2ff; } .s9 { background: #00f; }
.values { display: flex; flex-direction: column; justify-content: space-between; height: 185px; }
.viewtabs { flex: none; display: flex; height: 17px; border-top: 1px solid #85837d; border-bottom: 1px solid #222; border-left: 1px solid #222; overflow: hidden; }
.viewtabs button { height: 15px; padding: 0 2px; font-size: 13px; }
.viewtabs .current { height: 16px; padding: 0 1px; font-size: 12px; background: #fff; font-weight: 700; color: #111; }
.slope { width: 10px; height: 16px; fill: none; }
.lower { flex: none; height: 144px; margin-top: 6px; display: flex; gap: 6px; }
.graph { width: 264px; }
.anim { flex: none; display: flex; align-items: center; height: 28px; margin-right: 2px; overflow: hidden; border-left: 2px solid #66645f; border-top: 1px solid #66645f; }
.animlabel { flex: none; width: 56px; }
.play { flex: none; width: 25px; height: 24px; display: flex; align-items: center; justify-content: center; }
.play svg { width: 17px; height: 17px; }
.frames { flex: none; width: 40px; height: 18px; margin-left: 6px; padding-left: 4px; background: #fff; }
.chart { height: 74px; margin-right: 2px; padding: 20px 21px 0 54px; background: #fff; border-left: 2px solid #66645f; border-bottom: 1px solid #85837d; }
.timeline { height: 4px; border: 1px solid #555; }
.slot { height: 15px; margin-top: 24px; border: 1px solid #888; }
.foottabs { flex: 1; display: flex; background: #e9e7e4; padding-left: 4px; }
.foottabs button { display: flex; height: 20px; }
.foottabs svg { width: 24px; height: 20px; }
.foottabs span { height: 20px; padding-top: 2px; margin-left: -2px; border-bottom: 1px solid #777; }
.foottabs .current { margin-left: -8px; font-weight: 700; color: #202020; }
.foottabs .current span { padding-right: 7px; border-right: 1px solid #777; border-radius: 0 0 4px 0; }
.tabular { flex: 1; }
.sheet { flex: 1; background: #808080; border-top: 1px solid #555; border-left: 2px solid #555; }
.sheet table { border-collapse: collapse; }
.sheet th, .sheet td { height: 16px; padding: 0 3px; font-weight: 400; text-align: left; line-height: 15px; border-right: 1px solid #888; }
.sheet th { background: #d4d0c8; border-bottom: 1px solid #444; }
.sheet td { background: #e9e7e5; border-right-color: #c8c6c2; }
.sheet .n { width: 15px; }
.sheet .tm { width: 50px; }
.sheet .cklabel input { position: relative; width: 14px; height: 14px; border: 1px solid #555; margin: 0; }
.sheet .cklabel input::after { content: ""; position: absolute; left: 4px; top: 1px; width: 4px; height: 7px; border: solid #000; border-width: 0 2px 2px 0; transform: rotate(40deg); }
.min { color: #e03040; }
.max { color: #20a030; }
.status { flex: none; height: 7px; display: flex; gap: 2px; padding-top: 4px; background: #f0efec; }
.status span { flex: 1; border-top: 1px solid #85837d; border-left: 1px solid #85837d; background: #d4d0c8; }
```
